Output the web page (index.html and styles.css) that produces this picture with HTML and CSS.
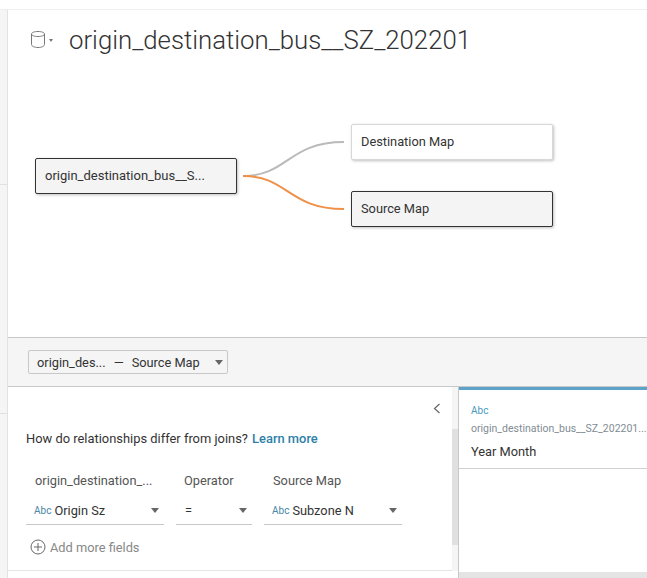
FILE: index.html
```html
<!DOCTYPE html>
<html lang="en">
<head>
    <meta charset="UTF-8">
    <title>origin_destination_bus__SZ_202201</title>
    <link rel="stylesheet" href="styles.css">
</head>
<body>
    <div class="topstrip"></div>
    <div class="app">
        <div class="siderail">
            <div class="rail-seg rail-a"></div>
            <div class="rail-seg rail-b"></div>
            <div class="rail-seg rail-c"></div>
        </div>
        <div class="main">
            <div class="canvas">
                <div class="title-row">
                    <svg class="db-icon" width="14" height="17" viewBox="0 0 14 17">
                        <path d="M.5 3C.5 1.500 3.300.5 7 .5s6.500 1 6.500 2.500v10.500c0 1.700-2.800 3-6.500 3s-6.500-1.300-6.500-3z M.5 3C.5 4.500 3.300 5.500 7 5.500s6.500-1 6.500-2.500" fill="none" stroke="#777" stroke-width="1"/>
                    </svg>
                    <span class="tiny-caret"></span>
                    <h1>origin_destination_bus__SZ_202201</h1>
                </div>
                <svg class="links" width="130" height="100" viewBox="0 0 130 100">
                    <path d="M0 52C45 52 45 18 101 18" fill="none" stroke="#bababa" stroke-width="2"/>
                    <path d="M0 52C45 52 45 85 101 85" fill="none" stroke="#f0914a" stroke-width="2"/>
                </svg>
                <div class="node node-root">origin_destination_bus__S...</div>
                <div class="node node-dest">Destination Map</div>
                <div class="node node-src">Source Map</div>
            </div>
            <div class="pickbar">
                <div class="picker">
                    <span class="picker-a">origin_des...</span>
                    <span class="picker-dash">—</span>
                    <span class="picker-b">Source Map</span>
                    <span class="caret"></span>
                </div>
            </div>
            <div class="bottom">
                <div class="relpanel">
                    <div class="rel-scroll">
                        <div class="collapse">
                            <svg width="8" height="11" viewBox="0 0 8 11"><path d="M6.500 1L1.500 5.500l5 4.500" fill="none" stroke="#666" stroke-width="1.200"/></svg>
                        </div>
                        <p class="help">How do relationships differ from joins? <a class="learn">Learn more</a></p>
                        <div class="fields">
                            <div class="field f-left">
                                <div class="field-label">origin_destination_...</div>
                                <div class="field-select"><span class="abc">Abc</span><span class="val">Origin Sz</span><span class="caret"></span></div>
                            </div>
                            <div class="field f-op">
                                <div class="field-label">Operator</div>
                                <div class="field-select"><span class="val">=</span><span class="caret"></span></div>
                            </div>
                            <div class="field f-right">
                                <div class="field-label">Source Map</div>
                                <div class="field-select"><span class="abc">Abc</span><span class="val">Subzone N</span><span class="caret"></span></div>
                            </div>
                        </div>
                        <div class="addmore">
                            <svg width="16" height="16" viewBox="0 0 16 16"><circle cx="8" cy="8" r="7" fill="none" stroke="#666" stroke-width="1"/><path d="M8 4v8M4 8h8" stroke="#666" stroke-width="1"/></svg>
                            <span>Add more fields</span>
                        </div>
                    </div>
                    <div class="scrollbar"><div class="thumb"></div></div>
                </div>
                <div class="grid-panel">
                    <div class="col-head">
                        <div class="col-type">Abc</div>
                        <div class="col-src">origin_destination_bus__SZ_202201...</div>
                        <div class="col-name">Year Month</div>
                    </div>
                    <div class="col-body"></div>
                    <div class="col-foot"></div>
                </div>
            </div>
        </div>
    </div>
</body>
</html>
```

FILE: styles.css
```css
html, body {
    margin: 0;
    height: 100%;
    overflow: hidden;
}
body {
    font-family: Roboto, "Open Sans", sans-serif;
    font-size: 12.8px;
    color: #333;
    background-color: #fff;
}
.topstrip {
    height: 9px;
    border-bottom: 1px solid #eee;
}
.app {
    display: flex;
    height: 568px;
}
.siderail {
    width: 7px;
    border-right: 1px solid #e2e2e2;
    background-color: #f5f5f5;
    display: flex;
    flex-direction: column;
}
.rail-seg {
    border-bottom: 1px solid #e0e0e0;
}
.rail-a { height: 174px; }
.rail-b { height: 228px; }
.rail-c { flex: 1; border-bottom: none; }
.main {
    flex: 1;
    display: flex;
    flex-direction: column;
    min-width: 0;
}
.canvas {
    position: relative;
    height: 327px;
    border-bottom: 1px solid #c8c8c8;
}
.title-row {
    display: flex;
    align-items: center;
    padding: 14px 0 0 23px;
}
.db-icon {
    margin: -2px 4px 0 0;
}
.tiny-caret {
    width: 0;
    height: 0;
    border-left: 2.500px solid transparent;
    border-right: 2.500px solid transparent;
    border-top: 3px solid #777;
    margin-right: 16px;
}
h1 {
    margin: 0;
    font-size: 25.75px;
    font-weight: 300;
    line-height: 32px;
    color: #333;
}
.links {
    position: absolute;
    left: 235px;
    top: 114px;
}
.node {
    position: absolute;
    box-sizing: border-box;
    height: 36px;
    line-height: 34px;
    padding-left: 9px;
    border: 1px solid #333;
    border-radius: 2px;
    background-color: #f4f4f4;
    box-shadow: 1px 1px 3px rgba(0, 0, 0, 0.25);
}
.node-root {
    left: 27px;
    top: 148px;
    width: 202px;
    font-size: 13px;
}
.node-dest {
    left: 343px;
    top: 114px;
    width: 202px;
    background-color: #fff;
    border-color: #d8d8d8;
}
.node-src {
    left: 343px;
    top: 181px;
    width: 202px;
}
.pickbar {
    box-sizing: border-box;
    height: 49px;
    background-color: #f5f5f5;
    border-bottom: 1px solid #c8c8c8;
    padding-top: 12px;
}
.picker {
    box-sizing: border-box;
    display: flex;
    align-items: center;
    margin-left: 20px;
    width: 200px;
    height: 24px;
    padding: 0 4px 0 8px;
    border: 1px solid #c8c8c8;
    border-radius: 2px;
}
.picker-dash {
    margin: 0 8px;
}
.caret {
    width: 0;
    height: 0;
    margin-left: auto;
    border-left: 4px solid transparent;
    border-right: 4px solid transparent;
    border-top: 5px solid #666;
}
.bottom {
    flex: 1;
    display: flex;
    min-height: 0;
}
.relpanel {
    width: 450px;
    display: flex;
    position: relative;
}
.rel-scroll {
    position: relative;
    box-sizing: border-box;
    width: 444px;
    height: 184px;
    border-bottom: 1px solid #e4e4e4;
    padding: 44px 0 0 18px;
}
.collapse {
    position: absolute;
    right: 11px;
    top: 15px;
}
.help {
    margin: 0;
    font-size: 12.9px;
    line-height: 15px;
}
.learn {
    margin-left: 1px;
    color: #2d7fa8;
    font-weight: 500;
}
.fields {
    display: flex;
    gap: 12px;
    margin-top: 27px;
}
.field {
    width: 138px;
}
.f-op {
    width: 76px;
}
.field-label {
    padding-left: 9px;
    line-height: 16px;
    color: #555;
}
.f-op .field-label {
    padding-left: 8px;
}
.field-select {
    box-sizing: border-box;
    display: flex;
    align-items: center;
    height: 29px;
    margin-top: 7px;
    padding: 0 5px 0 8px;
    border-bottom: 1px solid #c8c8c8;
}
.f-op .field-select {
    padding-left: 9px;
}
.abc {
    margin-right: 3px;
    font-size: 10px;
    color: #4a86a5;
}
.addmore {
    display: flex;
    align-items: center;
    gap: 4px;
    margin: 14px 0 0 4px;
    color: #888;
}
.scrollbar {
    width: 6px;
    height: 184px;
    background-color: #f5f5f5;
}
.thumb {
    height: 116px;
    margin-top: 42px;
    background-color: #e0e0e0;
}
.grid-panel {
    flex: 1;
    display: flex;
    flex-direction: column;
    border-left: 1px solid #c8c8c8;
    min-width: 0;
}
.col-head {
    box-sizing: border-box;
    height: 82px;
    border-top: 3px solid #5da2c8;
    border-bottom: 1px solid #d0d0d0;
    padding: 14px 0 0 12px;
}
.col-type {
    font-size: 10px;
    line-height: 13px;
    color: #4a9ac0;
}
.col-src {
    margin-top: 5px;
    font-size: 10.5px;
    line-height: 13px;
    white-space: nowrap;
    color: #7f8c94;
}
.col-name {
    margin-top: 9px;
    line-height: 16px;
}
.col-body {
    flex: 1;
}
.col-foot {
    height: 6px;
    background-color: #e4e4e4;
}
```
